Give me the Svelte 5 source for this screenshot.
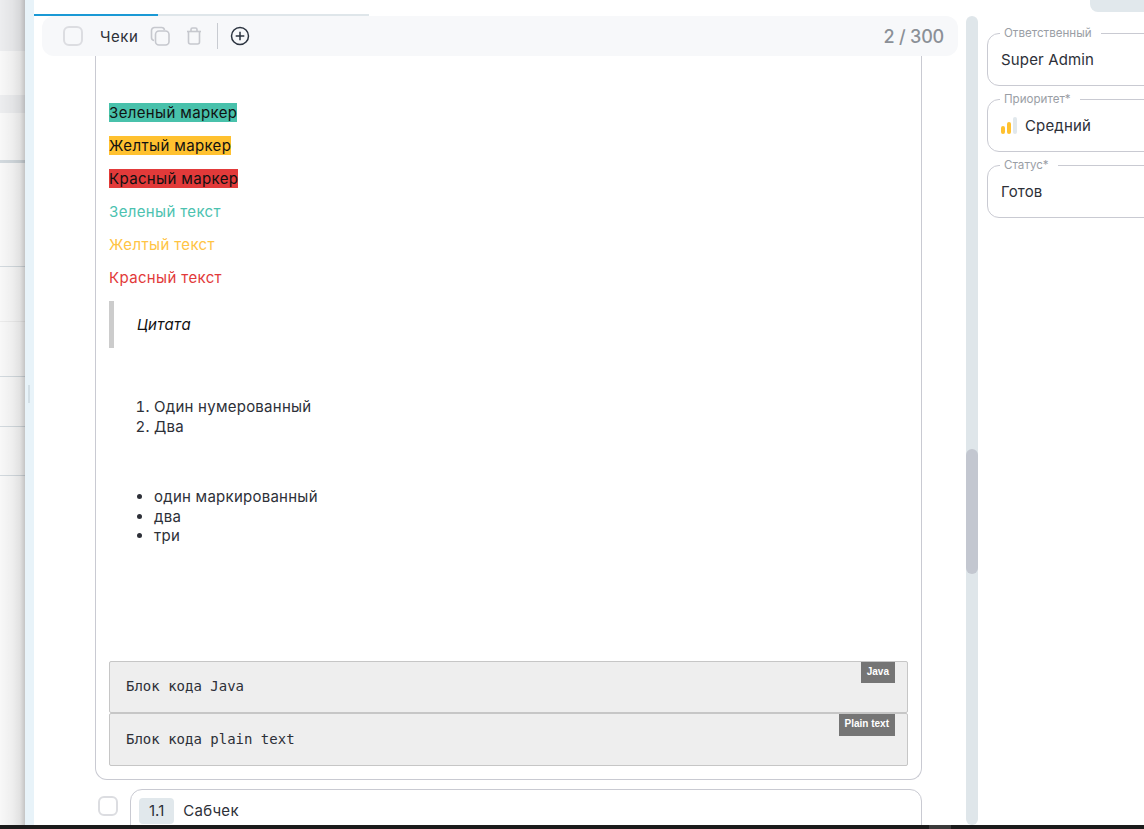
<script>
    const leftRows = [
        { h: 51, cls: 'grey' },
        { h: 44, cls: '' },
        { h: 18, cls: 'grey' },
        { h: 47, cls: '' },
        { h: 3, cls: 'thick' },
        { h: 104, cls: 'line' },
        { h: 55, cls: 'faint' },
        { h: 55, cls: 'line' },
        { h: 50, cls: 'line' },
        { h: 49, cls: 'line' },
        { h: 350, cls: '' }
    ];

    const markers = [
        { text: 'Зеленый маркер', color: 'green' },
        { text: 'Желтый маркер', color: 'yellow' },
        { text: 'Красный маркер', color: 'red' }
    ];

    const colored = [
        { text: 'Зеленый текст', color: 'green' },
        { text: 'Желтый текст', color: 'yellow' },
        { text: 'Красный текст', color: 'red' }
    ];

    const fields = [
        { label: 'Ответственный', value: 'Super Admin' },
        { label: 'Приоритет*', value: 'Средний', priority: true },
        { label: 'Статус*', value: 'Готов' }
    ];
</script>

<div class="page">
    <aside class="left">
        {#each leftRows as row}
            <div class="left-row {row.cls}" style="height: {row.h}px"></div>
        {/each}
    </aside>

    <div class="splitter"><span class="grip"></span></div>

    <main class="main">
        <div class="tabs">
            <span class="tab active"></span>
            <span class="tab"></span>
        </div>

        <div class="toolbar">
            <span class="check"></span>
            <span class="title">Чеки</span>
            <svg class="copy" width="20" height="20" viewBox="0 0 20 20" fill="none" stroke="#c6c8ce" stroke-width="1.6">
                <path d="M4 14.5 A3 3 0 0 1 1.5 11.500 V4.500 A3 3 0 0 1 4.500 1.500 H11.500 A3 3 0 0 1 14.500 4" />
                <rect x="5.500" y="5" width="13.500" height="14" rx="3.500" />
            </svg>
            <svg class="trash" width="18" height="20" viewBox="0 0 18 20" fill="none" stroke="#c6c8ce" stroke-width="1.6">
                <path d="M2 5.500 H16" />
                <path d="M6 5 V3.500 A1.500 1.500 0 0 1 7.500 2 H10.500 A1.500 1.500 0 0 1 12 3.500 V5" />
                <path d="M3.500 6 V16 A2 2 0 0 0 5.500 18 H12.500 A2 2 0 0 0 14.500 16 V6" />
            </svg>
            <span class="divider"></span>
            <svg class="plus" width="20" height="20" viewBox="0 0 20 20" fill="none" stroke="#2c3440" stroke-width="1.500">
                <circle cx="10" cy="10" r="8.500" />
                <path d="M10 5.700 V14.300 M5.700 10 H14.300" />
            </svg>
            <span class="count">2 / 300</span>
        </div>

        <div class="body">
            <section class="card">
                {#each markers as m}
                    <p><mark class={m.color}>{m.text}</mark></p>
                {/each}
                {#each colored as c}
                    <p class="text-{c.color}">{c.text}</p>
                {/each}
                <blockquote>Цитата</blockquote>
                <ol>
                    <li>Один нумерованный</li>
                    <li>Два</li>
                </ol>
                <ul>
                    <li>один маркированный</li>
                    <li>два</li>
                    <li>три</li>
                </ul>
                <div class="code first">
                    <code>Блок кода Java</code>
                    <span class="lang">Java</span>
                </div>
                <div class="code second">
                    <code>Блок кода plain text</code>
                    <span class="lang">Plain text</span>
                </div>
            </section>

            <div class="sub">
                <span class="check small"></span>
                <div class="sub-card">
                    <span class="num">1.1</span>
                    <span class="sub-title">Сабчек</span>
                </div>
            </div>
        </div>
    </main>

    <div class="scrollbar"><span class="thumb"></span></div>

    <aside class="right">
        <span class="corner"></span>
        {#each fields as f}
            <fieldset class="field">
                <legend>{f.label}</legend>
                <div class="value">
                    {#if f.priority}
                        <svg width="16" height="17" viewBox="0 0 16 17">
                            <rect x="0" y="9" width="4" height="8" rx="2" fill="#ffc12f" />
                            <rect x="6" y="5" width="4" height="12" rx="2" fill="#ffc12f" />
                            <rect x="12" y="0" width="4" height="17" rx="2" fill="#e1e8ec" />
                        </svg>
                    {/if}
                    {f.value}
                </div>
            </fieldset>
        {/each}
    </aside>
</div>
<div class="taskbar"><span class="taskbar-item"></span></div>

<style>
    :global(body) {
        margin: 0;
        overflow: hidden;
        background: #fff;
    }
    .page {
        display: flex;
        height: 825px;
        overflow: hidden;
        font-family: Inter, "Liberation Sans", sans-serif;
        color: #2d3038;
        letter-spacing: 0.3px;
    }
    .taskbar {
        height: 4px;
        background: #1b1b1b;
        padding-left: 929px;
    }
    .taskbar-item {
        display: block;
        width: 22px;
        height: 4px;
        background: #3a3a3a;
    }

    .left {
        width: 25px;
        flex: none;
        position: relative;
        overflow: hidden;
        background: #fff;
    }
    .left::after {
        content: '';
        position: absolute;
        inset: 0;
        background: linear-gradient(90deg, rgba(0, 0, 0, 0.01) 0%, rgba(0, 0, 0, 0.05) 50%, rgba(0, 0, 0, 0.1) 80%, rgba(0, 0, 0, 0.22) 100%);
    }
    .left-row {
        box-sizing: border-box;
        background: #fbfbfb;
    }
    .left-row.grey {
        background: #eff0f2;
    }
    .left-row.thick {
        background: #d5dce1;
    }
    .left-row.line {
        border-bottom: 1px solid #d5dce1;
    }
    .left-row.faint {
        border-bottom: 1px solid #eeeeee;
    }

    .splitter {
        width: 9px;
        flex: none;
        background: #e8f3f9;
        position: relative;
    }
    .grip {
        position: absolute;
        left: 3px;
        top: 385px;
        width: 2px;
        height: 18px;
        background: #d3dfe6;
    }

    .main {
        flex: none;
        width: 932px;
        display: flex;
        flex-direction: column;
        padding-top: 14px;
        box-sizing: border-box;
    }
    .tabs {
        display: flex;
        flex: none;
        height: 2px;
    }
    .tab {
        width: 211px;
        background: #dfe6ea;
    }
    .tab.active {
        width: 124px;
        background: #1a99d5;
    }

    .toolbar {
        margin: 0 8px;
        height: 40px;
        flex: none;
        display: flex;
        align-items: center;
        background: #f7f8fa;
        border-radius: 12px;
        padding: 0 14px 0 21px;
    }
    .check {
        box-sizing: border-box;
        width: 20px;
        height: 20px;
        flex: none;
        border: 2px solid #dcdde1;
        border-radius: 6px;
        background: #fff;
    }
    .toolbar .check {
        background: transparent;
    }
    .title {
        margin-left: 17px;
        font-size: 15px;
        letter-spacing: 0.5px;
    }
    .copy {
        margin-left: 12px;
    }
    .trash {
        margin-left: 15px;
    }
    .divider {
        width: 1px;
        height: 26px;
        margin-left: 14px;
        background: #c8cbd1;
    }
    .plus {
        margin-left: 12px;
    }
    .count {
        margin-left: auto;
        font-size: 18px;
        font-weight: 500;
        letter-spacing: -0.2px;
        color: #8b9097;
    }

    .body {
        padding: 0 44px 0 61px;
    }
    .card {
        box-sizing: border-box;
        height: 724px;
        padding: 47px 13px 0;
        border: 1px solid #c9cad2;
        border-top: none;
        border-radius: 0 0 12px 12px;
        font-size: 15px;
    }
    p {
        margin: 0 0 14px;
        height: 19px;
        line-height: 19px;
        letter-spacing: 0.36px;
    }
    mark {
        color: #111;
    }
    .green {
        background: #48c1ab;
    }
    .yellow {
        background: #ffc12f;
    }
    .red {
        background: #e23a3a;
    }
    .text-green {
        color: #4cc2b0;
    }
    .text-yellow {
        color: #ffc444;
    }
    .text-red {
        color: #e23a3a;
    }
    blockquote {
        box-sizing: border-box;
        height: 47px;
        margin: 0;
        padding-left: 23px;
        border-left: 5px solid #cccccc;
        font-style: italic;
        line-height: 47px;
        color: #111;
    }
    ol,
    ul {
        margin: 0;
        padding-left: 45px;
        line-height: 19.5px;
        letter-spacing: 0.25px;
    }
    ol {
        margin-top: 49px;
    }
    ul {
        margin-top: 51px;
        margin-bottom: 115px;
    }
    .code {
        box-sizing: border-box;
        position: relative;
        height: 52px;
        padding: 14px 16px;
        background: #eeeeee;
        border: 1px solid #c6c6c6;
        border-radius: 2px;
    }
    .code.second {
        height: 53px;
        padding-top: 15px;
    }
    code {
        font-family: "DejaVu Sans Mono", "Liberation Mono", monospace;
        font-size: 14px;
        line-height: 17px;
        letter-spacing: 0;
        color: #2d3038;
    }
    .lang {
        position: absolute;
        top: 0;
        right: 12px;
        padding: 3px 6px 4px 6px;
        background: #757575;
        color: #fff;
        font-family: "Liberation Sans", Arial, sans-serif;
        font-size: 10px;
        font-weight: 700;
        line-height: 14px;
        letter-spacing: 0;
    }
    .second .lang {
        padding-bottom: 5px;
    }

    .sub {
        display: flex;
        align-items: flex-start;
        gap: 12px;
        margin: 9px 0 0 -23px;
        padding-left: 26px;
    }
    .check.small {
        margin-top: 7px;
    }
    .sub-card {
        flex: 1;
        box-sizing: border-box;
        height: 60px;
        display: flex;
        align-items: flex-start;
        gap: 9px;
        padding: 8px;
        border: 1px solid #c9cad2;
        border-radius: 12px;
        font-size: 15px;
    }
    .num {
        padding: 0 10px;
        height: 26px;
        line-height: 26px;
        background: #e1e8ec;
        border-radius: 4px;
        letter-spacing: 0;
    }
    .sub-title {
        line-height: 26px;
    }

    .scrollbar {
        width: 12px;
        flex: none;
        margin-top: 16px;
        height: 809px;
        background: #dfe6ea;
        border-radius: 6px;
        position: relative;
    }
    .thumb {
        position: absolute;
        left: 0;
        right: 0;
        top: 433px;
        height: 125px;
        background: #c3c7d0;
        border-radius: 6px;
    }

    .right {
        flex: none;
        width: 240px;
        position: relative;
        padding: 26px 0 0 9px;
        box-sizing: border-box;
    }
    .corner {
        position: absolute;
        top: 0;
        left: 112px;
        width: 80px;
        height: 12px;
        background: #e1e8ec;
        border-radius: 0 0 0 8px;
    }
    .field {
        box-sizing: border-box;
        height: 60px;
        width: 230px;
        margin: 0 0 6px;
        padding: 0 13px;
        border: 1px solid #c9cad2;
        border-radius: 12px;
    }
    legend {
        padding: 0 9px 0 4px;
        margin-left: -1px;
        font-size: 11.6px;
        line-height: 14px;
        letter-spacing: 0;
        color: #9a9ea5;
    }
    .value {
        display: flex;
        align-items: center;
        gap: 8px;
        height: 38px;
        font-size: 15px;
        letter-spacing: 0.15px;
    }
</style>
